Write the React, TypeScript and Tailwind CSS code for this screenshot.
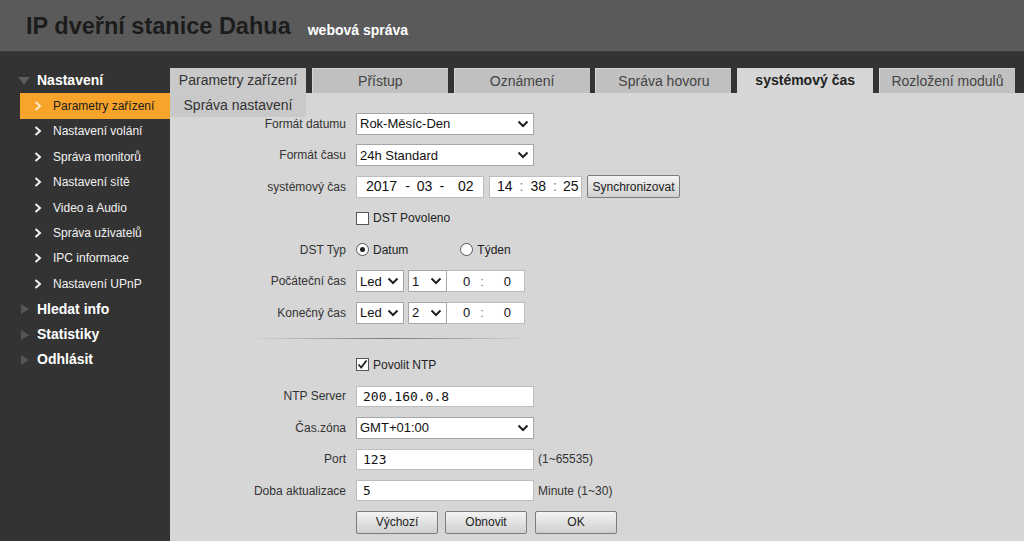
import React from "react";

const MENU = [
  "Parametry zařízení",
  "Nastavení volání",
  "Správa monitorů",
  "Nastavení sítě",
  "Video a Audio",
  "Správa uživatelů",
  "IPC informace",
  "Nastavení UPnP",
];

const TABS = [
  "Parametry zařízení",
  "Přístup",
  "Oznámení",
  "Správa hovoru",
  "systémový čas",
  "Rozložení modulů",
];

function Chevron({ className = "" }: { className?: string }) {
  return (
    <svg width="12" height="8" viewBox="0 0 12 8" className={className}>
      <path d="M1.5 1.5 L6 6 L10.5 1.5" fill="none" stroke="#222" strokeWidth="2" />
    </svg>
  );
}

function Select({ value, w }: { value: string; w: string }) {
  return (
    <div className={`${w} h-[22px] bg-white border border-[#a6a6a6] flex items-center justify-between pl-[3px] pr-[4px] text-[13px] text-[#111]`}>
      <span>{value}</span>
      <Chevron />
    </div>
  );
}

function Input({ value }: { value: string }) {
  return (
    <div className="w-[178px] h-[21px] bg-white border border-[#bdbdbd] flex items-center pl-[6px] text-[13px] text-[#111] font-['DejaVu_Sans_Mono',monospace]">
      {value}
    </div>
  );
}

function Row({ label, children, h = "h-[31.5px]" }: { label?: string; children: React.ReactNode; h?: string }) {
  return (
    <div className={`flex items-center ${h}`}>
      <div className="w-[176px] text-right text-[12px] text-[#333]">{label}</div>
      <div className="ml-[10px] flex items-center">{children}</div>
    </div>
  );
}

function Check({ checked }: { checked?: boolean }) {
  return (
    <div className="w-[13px] h-[13px] bg-white border border-[#555] flex items-center justify-center">
      {checked && (
        <svg width="11" height="11" viewBox="0 0 11 11">
          <path d="M1.5 5.5 L4.2 8.5 L9.5 1.5" fill="none" stroke="#222" strokeWidth="1.8" />
        </svg>
      )}
    </div>
  );
}

function Radio({ on }: { on?: boolean }) {
  return (
    <div className="w-[13px] h-[13px] rounded-full bg-white border border-[#555] flex items-center justify-center">
      {on && <div className="w-[5px] h-[5px] rounded-full bg-[#222]" />}
    </div>
  );
}

function Btn({ children, w }: { children: React.ReactNode; w: string }) {
  return (
    <div className={`${w} h-[23px] border border-[#7c7c7c] rounded-[2px] bg-gradient-to-b from-[#f4f4f4] to-[#cfcfcf] flex items-center justify-center text-[12px] text-[#222]`}>
      {children}
    </div>
  );
}

export default function App() {
  return (
    <div className="w-[1024px] h-[541px] overflow-hidden flex flex-col bg-[#333333] font-['Liberation_Sans',Arial,sans-serif]">
      {/* Header */}
      <div className="h-[52px] bg-[#5a5a5a] border-b border-[#3f3f3f] flex items-end pb-[13px] pl-[26px]">
        <span className="text-[23.5px] font-bold text-[#1c1c1c] leading-none">IP dveřní stanice Dahua</span>
        <span className="ml-[17px] mb-[1px] text-[14px] font-bold text-white leading-none">webová správa</span>
      </div>

      <div className="flex flex-1 min-h-0">
        {/* Sidebar */}
        <div className="w-[170px] pt-[16px] text-white">
          <div className="h-[25.4px] flex items-center pl-[18px]">
            <svg width="12" height="8" viewBox="0 0 12 8"><path d="M0 0 L12 0 L6 8 Z" fill="#5c5c5c" /></svg>
            <span className="ml-[7px] text-[14px] font-bold">Nastavení</span>
          </div>
          {MENU.map((m, i) => (
            <div key={m} className={`h-[25.4px] ml-[20px] flex items-center pl-[14px] text-[12px] ${i === 0 ? "bg-[#f8a42b] text-[#1a1a1a]" : "text-[#f2f2f2]"}`}>
              <svg width="8" height="10" viewBox="0 0 8 10"><path d="M1.5 1 L6 5 L1.5 9" fill="none" stroke={i === 0 ? "#fde8c4" : "#f2f2f2"} strokeWidth="2" /></svg>
              <span className="ml-[11px]">{m}</span>
            </div>
          ))}
          {["Hledat info", "Statistiky", "Odhlásit"].map((m) => (
            <div key={m} className="h-[25.4px] flex items-center pl-[21px]">
              <svg width="8" height="10" viewBox="0 0 8 10"><path d="M0 0 L8 5 L0 10 Z" fill="#555" /></svg>
              <span className="ml-[8px] text-[14px] font-bold">{m}</span>
            </div>
          ))}
        </div>

        {/* Main */}
        <div className="flex-1 flex flex-col pt-[16px]">
          <div className="relative h-[25px] flex gap-[5.8px]">
            {TABS.map((t, i) => (
              <div
                key={t}
                className={`w-[136px] h-[25px] flex items-center justify-center text-[14px] ${
                  i === 4
                    ? "bg-[#d6d6d6] font-bold text-[#222]"
                    : i === 0
                    ? "bg-[#c9c9c9] text-[#333]"
                    : "bg-[#c0c0c0] border-t border-l border-[#d4d4d4] text-[#444]"
                }`}
              >
                {t}
              </div>
            ))}
            <div className="absolute left-0 top-[25px] w-[136px] h-[24px] bg-[#c9c9c9] flex items-center justify-center text-[14px] text-[#333] z-10">
              Správa nastavení
            </div>
          </div>

          <div className="flex-1 bg-[#d6d6d6] pt-[15px]">
            <Row label="Formát datumu"><Select value="Rok-Měsíc-Den" w="w-[178px]" /></Row>
            <Row label="Formát času"><Select value="24h Standard" w="w-[178px]" /></Row>
            <Row label="systémový čas">
              <div className="w-[128px] h-[22px] bg-white border border-[#bdbdbd] flex items-center text-[14px] text-[#111]">
                <span className="ml-[9px]">2017</span>
                <span className="ml-[8px]">-</span>
                <span className="ml-[7px]">03</span>
                <span className="ml-[7px]">-</span>
                <span className="ml-[14px]">02</span>
              </div>
              <div className="ml-[5px] w-[93px] h-[22px] bg-white border border-[#bdbdbd] flex items-center text-[14px] text-[#111]">
                <span className="ml-[7px]">14</span>
                <span className="ml-[7px] text-[#777]">:</span>
                <span className="ml-[7px]">38</span>
                <span className="ml-[7px] text-[#777]">:</span>
                <span className="ml-[6px]">25</span>
              </div>
              <div className="ml-[5px]"><Btn w="w-[93px]">Synchronizovat</Btn></div>
            </Row>
            <Row>
              <Check />
              <span className="ml-[4px] text-[12px] text-[#222]">DST Povoleno</span>
            </Row>
            <Row label="DST Typ">
              <Radio on />
              <span className="ml-[4px] text-[12px] text-[#222]">Datum</span>
              <div className="ml-[52px]"><Radio /></div>
              <span className="ml-[4px] text-[12px] text-[#222]">Týden</span>
            </Row>
            {[["Počáteční čas", "1"], ["Konečný čas", "2"]].map(([l, d]) => (
              <Row key={l} label={l}>
                <Select value="Led" w="w-[48px]" />
                <div className="ml-[4px]"><Select value={d} w="w-[39px]" /></div>
                <div className="w-[78px] h-[22px] bg-white border border-[#bdbdbd] border-l-0 flex items-center text-[13px] text-[#111]">
                  <span className="ml-[16px]">0</span>
                  <span className="ml-[10px] text-[#777]">:</span>
                  <span className="ml-[20px]">0</span>
                </div>
              </Row>
            ))}
            <div className="h-[20.5px] flex items-center pl-[78px]">
              <div className="w-[282px] h-[1px] bg-gradient-to-r from-transparent via-[#7a7a7a] to-transparent" />
            </div>
            <Row>
              <Check checked />
              <span className="ml-[4px] text-[12px] text-[#222]">Povolit NTP</span>
            </Row>
            <Row label="NTP Server"><Input value="200.160.0.8" /></Row>
            <Row label="Čas.zóna"><Select value="GMT+01:00" w="w-[178px]" /></Row>
            <Row label="Port">
              <Input value="123" />
              <span className="ml-[4px] text-[12px] text-[#333]">(1~65535)</span>
            </Row>
            <Row label="Doba aktualizace">
              <Input value="5" />
              <span className="ml-[4px] text-[12px] text-[#333]">Minute (1~30)</span>
            </Row>
            <Row h="h-[31px]">
              <Btn w="w-[82px]">Výchozí</Btn>
              <div className="ml-[7px]"><Btn w="w-[82px]">Obnovit</Btn></div>
              <div className="ml-[8px]"><Btn w="w-[82px]">OK</Btn></div>
            </Row>
          </div>
        </div>
      </div>
    </div>
  );
}
